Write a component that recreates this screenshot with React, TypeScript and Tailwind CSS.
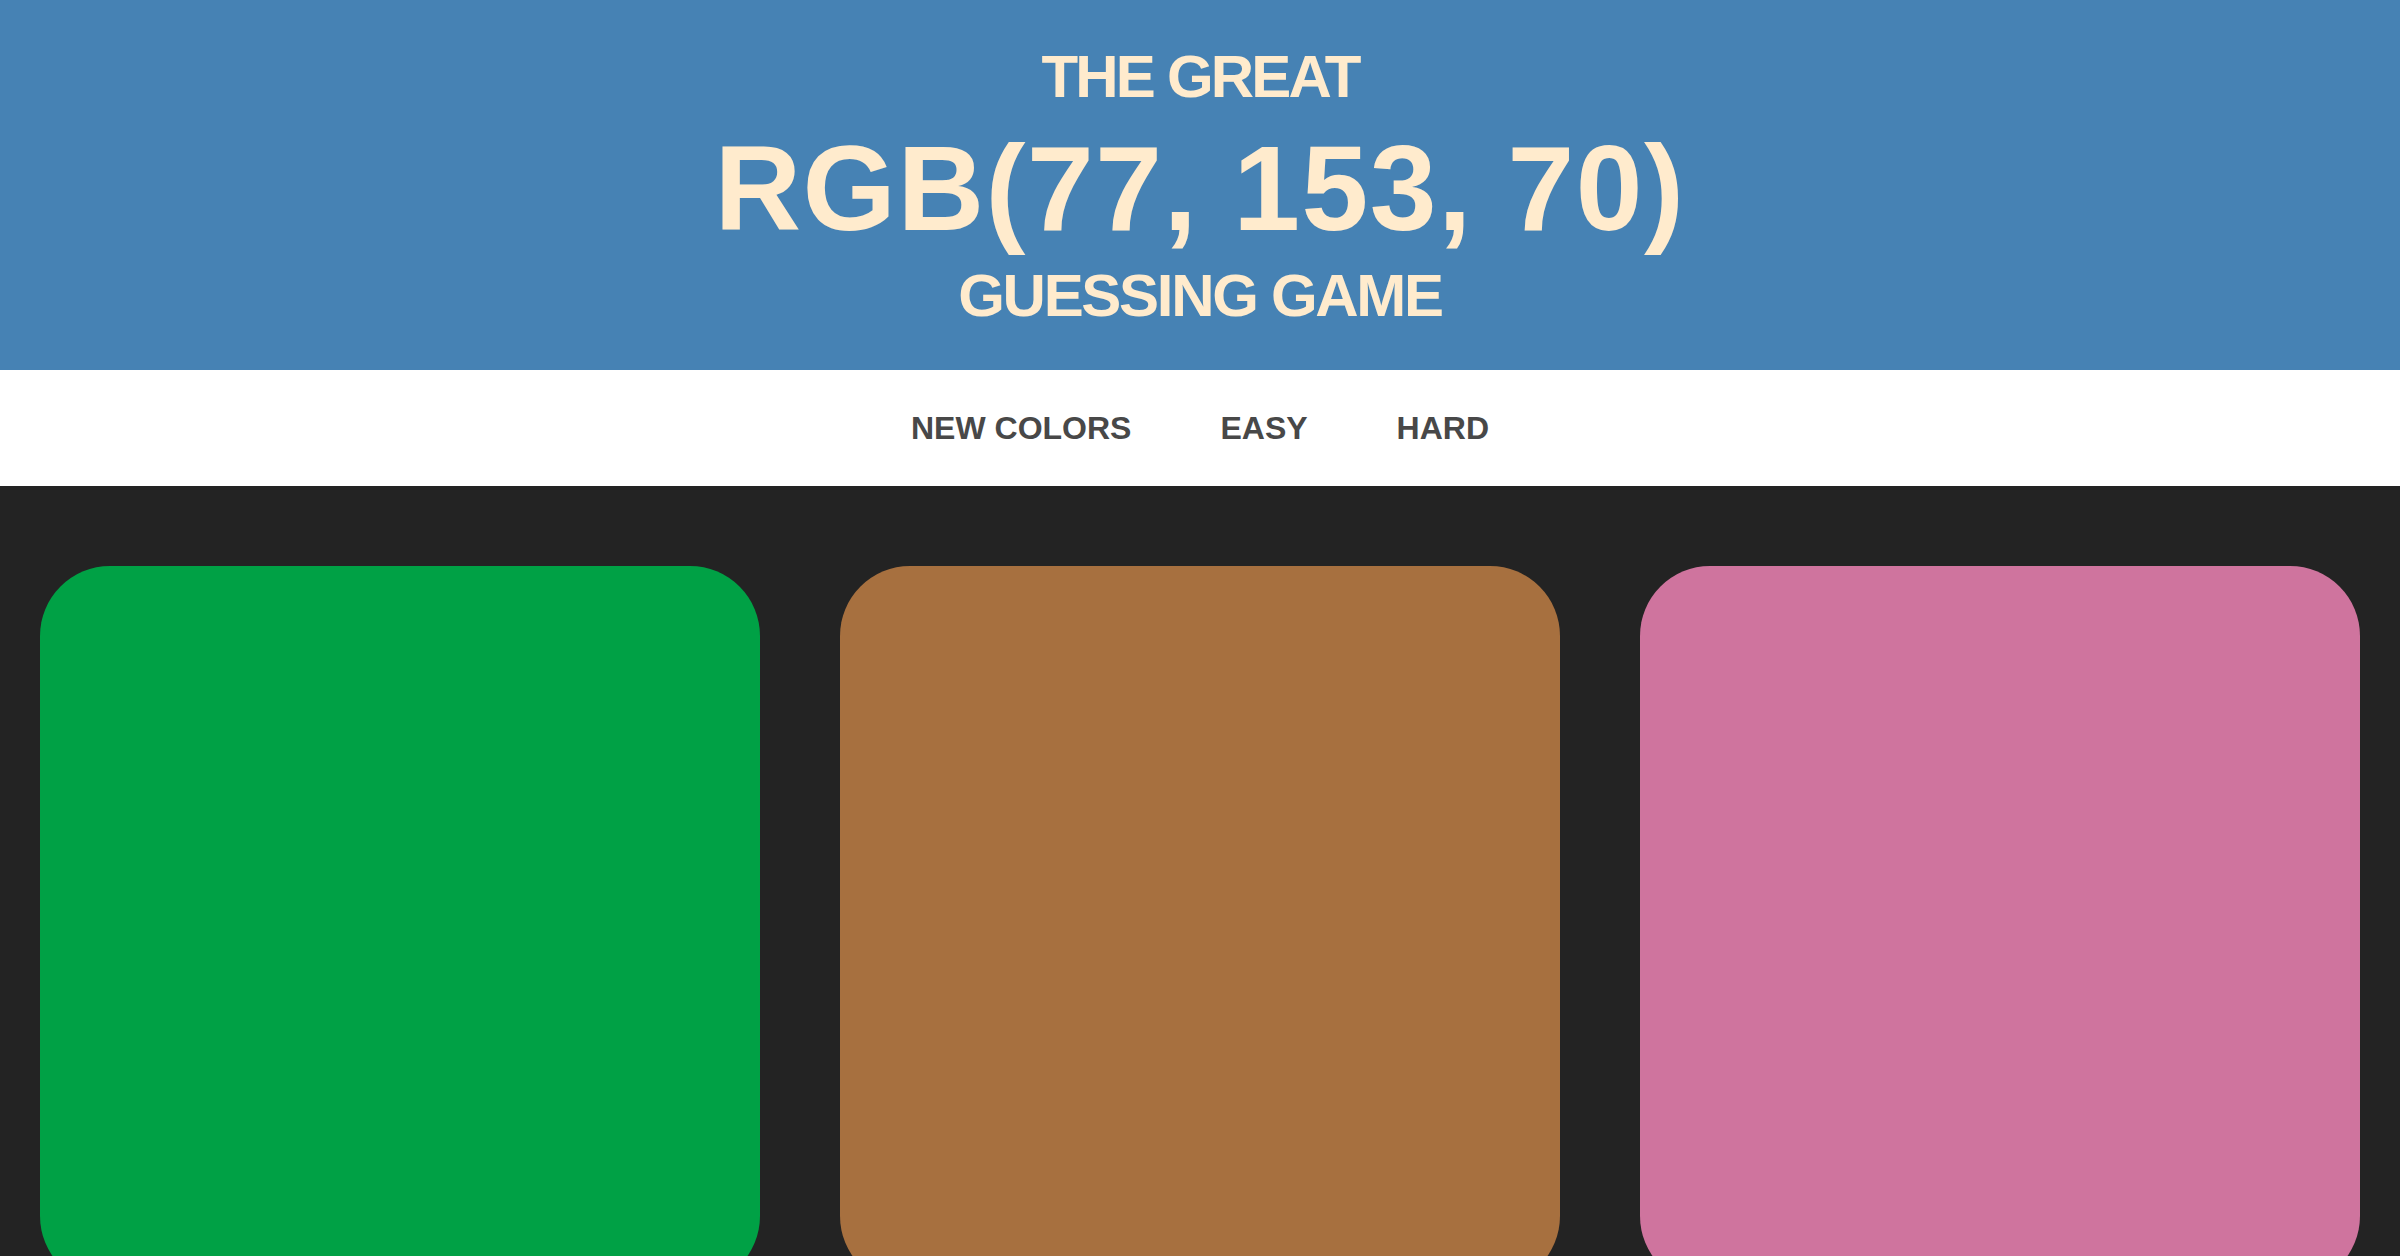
export default function App() {
  const squares = ['#00a145', '#a7703f', '#cf749e'];

  return (
    <div className="min-h-screen bg-[#232323] font-['Liberation_Sans',Arial,sans-serif]">
      {/* Title */}
      <header className="h-[370px] bg-[#4682b4] text-[#ffebcd] font-bold uppercase text-center pt-[47px]">
        <h1>
          <span className="block text-[60px] leading-[60px] tracking-[-2.8px]">The Great</span>
          <span className="block text-[120px] leading-[120px] tracking-[1.5px] mt-[21px]">RGB(77, 153, 70)</span>
          <span className="block text-[60px] leading-[60px] tracking-[-2.3px] mt-[18px]">Guessing Game</span>
        </h1>
      </header>

      {/* Controls */}
      <nav className="h-[116px] bg-white flex items-center justify-center gap-[89px]">
        <button className="text-[32px] leading-[32px] font-bold uppercase text-[#484848]">New Colors</button>
        <button className="text-[32px] leading-[32px] font-bold uppercase text-[#484848]">Easy</button>
        <button className="text-[32px] leading-[32px] font-bold uppercase text-[#484848]">Hard</button>
      </nav>

      {/* Squares */}
      <div className="grid grid-cols-3 gap-[80px] px-[40px] pt-[80px] pb-[40px]">
        {squares.map((c) => (
          <div
            key={c}
            className="aspect-square rounded-[70px]"
            style={{ backgroundColor: c }}
          />
        ))}
      </div>
    </div>
  );
}
